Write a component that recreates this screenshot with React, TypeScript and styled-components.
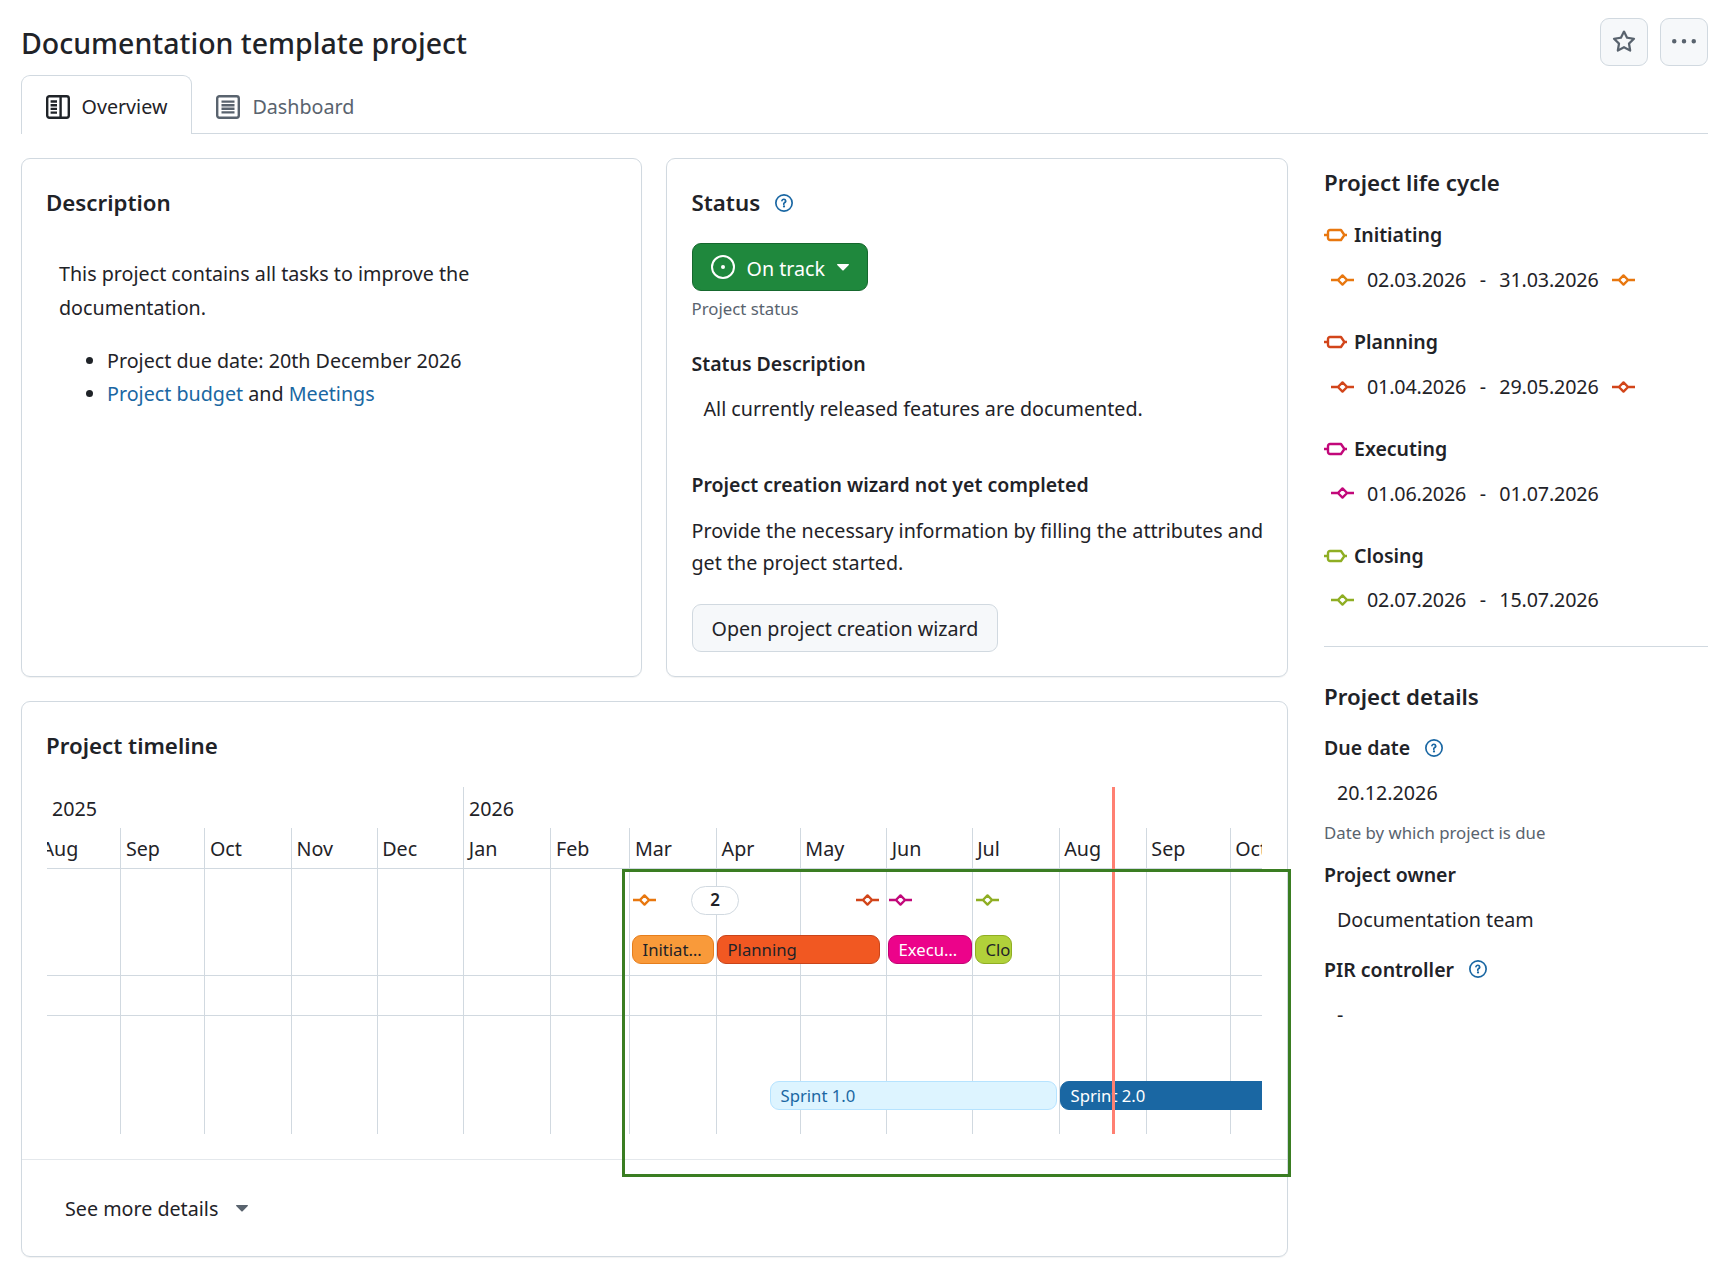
import React from "react";
import styled, { createGlobalStyle } from "styled-components";

const Global = createGlobalStyle`
  * { box-sizing: border-box; }
  html, body { margin: 0; padding: 0; background: #fff; }
  body {
    font-family: "Noto Sans", "Liberation Sans", sans-serif;
    font-size: 19.7px;
    line-height: 33.6px;
    color: #1f2328;
  }
`;

const Page = styled.div`
  width: 1720px;
  min-height: 1274px;
  padding: 18px 12px 0 21px;
`;
const TitleRow = styled.header`
  display: flex;
  justify-content: space-between;
  align-items: flex-start;
  height: 57px;
`;
const Title = styled.h1`
  margin: 0;
  padding-top: 1px;
  font-size: 28.5px;
  line-height: 48px;
  font-weight: 500;
`;
const Actions = styled.div`
  display: flex;
  gap: 12px;
`;
const IconButton = styled.button`
  width: 48px;
  height: 48px;
  padding: 0;
  display: flex;
  align-items: center;
  justify-content: center;
  background: #f6f8fa;
  border: 1.5px solid #d1d9e0;
  border-radius: 9px;
  color: #59636e;
`;
const TabBar = styled.nav`
  display: flex;
  height: 59px;
  border-bottom: 1.5px solid #d1d9e0;
`;
const Tab = styled.a<{ $active?: boolean }>`
  display: flex;
  align-items: center;
  gap: 12px;
  height: 59px;
  padding: 3px 23.5px 0;
  color: ${(p) => (p.$active ? "#1f2328" : "#59636e")};
  ${(p) =>
    p.$active
      ? `background: #fff; border: 1.5px solid #d1d9e0; border-bottom: 0; border-radius: 9px 9px 0 0;`
      : `background: transparent; border: 1.5px solid transparent; border-bottom: 0;`}
`;
const Layout = styled.div`
  display: grid;
  grid-template-columns: 1fr 384px;
  gap: 36px;
  margin-top: 24px;
`;
const MainColumn = styled.main`
  display: grid;
  grid-template-columns: 620.5px 1fr;
  gap: 24px;
`;
const Card = styled.section<{ $wide?: boolean; $inset?: number }>`
  position: relative;
  padding: 24px 24px 24px ${(p) => p.$inset ?? 24}px;
  border: 1.5px solid #d1d9e0;
  border-radius: 9px;
  box-shadow: 0 1px 1px rgba(31, 35, 40, 0.06);
  ${(p) => (p.$wide ? "grid-column: 1 / -1; padding: 0;" : "")}
`;
const CardBody = styled.div`
  padding: 24px 24px 25px;
`;
const CardTitle = styled.h2`
  display: flex;
  align-items: center;
  gap: 15px;
  margin: 0;
  padding-top: 1px;
  font-size: 22.3px;
  line-height: 38.4px;
  font-weight: 600;
`;
const Prose = styled.p`
  margin: 35px 0 0;
  padding: 0 100px 0 13px;
`;
const BulletList = styled.ul`
  margin: 19px 0 0;
  padding: 0 0 0 61px;
`;
const Link = styled.a`
  color: #1a67a3;
`;
const StatusButton = styled.button`
  display: flex;
  align-items: center;
  gap: 12px;
  height: 48px;
  margin-top: 21px;
  padding: 0 18px;
  background: #1f883d;
  color: #fff;
  border: 1.5px solid #16682e;
  border-radius: 9px;
  font: inherit;
`;
const ButtonLabel = styled.span`
  padding-top: 2px;
`;
const Caption = styled.div<{ $mt?: number }>`
  margin-top: ${(p) => p.$mt ?? 4}px;
  font-size: 16.8px;
  line-height: 28.8px;
  color: #59636e;
`;
const SubTitle = styled.h3<{ $mt: number }>`
  display: flex;
  align-items: center;
  gap: 15px;
  margin: ${(p) => p.$mt}px 0 0;
  font-size: 19.5px;
  line-height: 33.6px;
  font-weight: 600;
`;
const IndentedValue = styled.div<{ $mt: number }>`
  margin-top: ${(p) => p.$mt}px;
  padding-left: 12px;
`;
const Paragraph = styled.p`
  margin: 13px -6px 0 0;
  line-height: 32.4px;
`;
const SecondaryButton = styled.button`
  display: block;
  height: 48px;
  margin-top: 24px;
  padding: 2px 19px 0;
  background: #f6f8fa;
  color: #1f2328;
  border: 1.5px solid #d1d9e0;
  border-radius: 9px;
  font: inherit;
`;

/* timeline */
const Chart = styled.div`
  position: relative;
  width: 1215px;
  height: 347px;
  margin: 22px 0 0 1px;
  overflow: hidden;
`;
const YearRow = styled.div`
  display: flex;
  height: 41px;
`;
const Year = styled.div<{ $w: number; $line?: boolean }>`
  width: ${(p) => p.$w}px;
  padding-left: 5px;
  line-height: 44px;
  ${(p) => (p.$line ? "border-left: 1.5px solid #d1d9e0;" : "")}
`;
const MonthRow = styled.div`
  display: flex;
  height: 306px;
  margin-left: -11px;
`;
const Month = styled.div<{ $w: number }>`
  flex: none;
  width: ${(p) => p.$w}px;
  padding-left: 4.5px;
  border-left: 1.5px solid #d1d9e0;
  line-height: 42px;
  white-space: nowrap;
  overflow: hidden;
`;
const ChartRows = styled.div`
  position: absolute;
  left: 0;
  right: 0;
  top: 81px;
`;
const ChartRow = styled.div<{ $h: number }>`
  height: ${(p) => p.$h}px;
  border-top: 1.5px solid #d1d9e0;
`;
const Bar = styled.div<{ $l: number; $w: number; $t: number; $bg: string; $bc: string; $fg: string; $clip?: boolean; $flat?: boolean }>`
  position: absolute;
  left: ${(p) => p.$l - 47}px;
  width: ${(p) => p.$w}px;
  top: ${(p) => p.$t - 787}px;
  height: 29px;
  padding: 0 0 0 9.5px;
  font-size: 16.7px;
  line-height: 28px;
  background: ${(p) => p.$bg};
  color: ${(p) => p.$fg};
  border: 1.5px solid ${(p) => p.$bc};
  border-radius: ${(p) => (p.$flat ? "9px 0 0 9px" : "9px")};
  white-space: nowrap;
  overflow: hidden;
  text-overflow: ${(p) => (p.$clip ? "clip" : "ellipsis")};
  padding-right: ${(p) => (p.$clip ? 0 : 9)}px;
`;
const Marker = styled.div<{ $x: number }>`
  position: absolute;
  left: ${(p) => p.$x - 47 - 12}px;
  top: ${900 - 787 - 8}px;
  display: flex;
`;
const CountBadge = styled.div`
  position: absolute;
  left: ${691 - 47}px;
  top: ${886 - 787}px;
  width: 48px;
  height: 29px;
  border: 1.5px solid #d1d9e0;
  border-radius: 15px;
  background: #fff;
  text-align: center;
  font-size: 17px;
  line-height: 26px;
  font-weight: 600;
`;
const TodayLine = styled.div`
  position: absolute;
  left: ${1111.5 - 47}px;
  top: 0;
  bottom: 0;
  width: 3px;
  background: #ff8072;
`;
const Highlight = styled.div`
  position: absolute;
  left: 600px;
  top: 167.5px;
  width: 669px;
  height: 308px;
  border: 3px solid #3a7d22;
  pointer-events: none;
`;
const CardFooter = styled.div`
  display: flex;
  align-items: center;
  gap: 18px;
  height: 97px;
  padding: 1px 0 0 43px;
  border-top: 1.5px solid #e4e8ec;
  color: #1f2328;
`;

/* sidebar */
const Sidebar = styled.aside`
  padding-top: 6px;
`;
const SideTitle = styled.h2<{ $mt?: number }>`
  margin: ${(p) => p.$mt ?? 0}px 0 0;
  font-size: 22.3px;
  line-height: 38.4px;
  font-weight: 600;
`;
const PhaseName = styled.h3<{ $mt: number }>`
  display: flex;
  align-items: center;
  gap: 7px;
  margin: ${(p) => p.$mt}px 0 0;
  font-size: 19.5px;
  line-height: 33.6px;
  font-weight: 600;
`;
const DateRow = styled.div`
  display: flex;
  align-items: center;
  margin-top: 11px;
  padding-left: 7px;
  letter-spacing: -0.15px;
`;
const DateRange = styled.span`
  display: inline-flex;
  gap: 13.5px;
  margin: 0 13px;
`;
const Divider = styled.hr`
  height: 1.5px;
  margin: 29px 0 0;
  border: 0;
  background: #d1d9e0;
`;
const FieldValue = styled.div<{ $mt: number }>`
  margin-top: ${(p) => p.$mt}px;
  padding-left: 13px;
`;

const Help = () => (
  <svg width="18" height="18" viewBox="0 0 16 16" fill="#1a67a3">
    <path d="M0 8a8 8 0 1 1 16 0A8 8 0 0 1 0 8Zm8-6.5a6.5 6.5 0 1 0 0 13 6.5 6.5 0 0 0 0-13ZM6.92 6.085h.001a.749.749 0 1 1-1.415-.49 2.5 2.5 0 0 1 4.743.328c.247 1.161-.51 1.84-1.197 2.278-.355.226-.49.42-.49.65V9a.75.75 0 0 1-1.5 0v-.149c0-.92.594-1.513 1.078-1.82.462-.295.61-.57.525-.977a1 1 0 0 0-1.745-.37ZM9 11a1 1 0 1 1-2 0 1 1 0 0 1 2 0Z" />
  </svg>
);
const Caret = ({ color }: { color: string }) => (
  <svg width="12" height="7" viewBox="0 0 12 7" fill={color}>
    <path d="M.6 0h10.8c.5 0 .8.6.4 1L6.4 6.4a.6.6 0 0 1-.8 0L.2 1C-.2.6.1 0 .6 0Z" />
  </svg>
);
const Star = () => (
  <svg width="24" height="24" viewBox="0 0 16 16" fill="currentColor">
    <path d="M8 .25a.75.75 0 0 1 .673.418l1.882 3.815 4.21.612a.75.75 0 0 1 .416 1.279l-3.046 2.97.719 4.192a.751.751 0 0 1-1.088.791L8 12.347l-3.766 1.98a.75.75 0 0 1-1.088-.79l.72-4.194L.818 6.374a.75.75 0 0 1 .416-1.28l4.21-.611L7.327.668A.75.75 0 0 1 8 .25Zm0 2.445L6.615 5.5a.75.75 0 0 1-.564.41l-3.097.45 2.24 2.184a.75.75 0 0 1 .216.664l-.528 3.084 2.769-1.456a.75.75 0 0 1 .698 0l2.77 1.456-.53-3.084a.75.75 0 0 1 .216-.664l2.24-2.183-3.096-.45a.75.75 0 0 1-.564-.41L8 2.694Z" />
  </svg>
);
const Kebab = () => (
  <svg width="24" height="24" viewBox="0 0 16 16" fill="currentColor">
    <path d="M8 9a1.5 1.5 0 1 0 0-3 1.5 1.5 0 0 0 0 3ZM1.5 9a1.5 1.5 0 1 0 0-3 1.5 1.5 0 0 0 0 3Zm13 0a1.5 1.5 0 1 0 0-3 1.5 1.5 0 0 0 0 3Z" />
  </svg>
);
const OverviewIcon = () => (
  <svg width="24" height="24" viewBox="0 0 24 24" fill="none" stroke="#1f2328" strokeWidth="2.4">
    <rect x="1.2" y="1.2" width="21.6" height="21.6" rx="2.2" />
    <path d="M14.6 1.2v21.6M4.6 6.5h6.4M4.6 10.2h6.4M4.6 13.9h6.4M4.6 17.6h6.4" />
  </svg>
);
const DashboardIcon = () => (
  <svg width="24" height="24" viewBox="0 0 24 24" fill="none" stroke="#59636e" strokeWidth="2.4">
    <rect x="1.2" y="1.2" width="21.6" height="21.6" rx="2.2" />
    <path d="M5.5 6.6h13M5.5 10.2h13M5.5 13.8h13M5.5 17.4h13" />
  </svg>
);
const TrackIcon = () => (
  <svg width="24" height="24" viewBox="0 0 24 24" fill="none" stroke="#fff" strokeWidth="2">
    <circle cx="12" cy="12" r="11" />
    <circle cx="12" cy="12" r="2" fill="#fff" stroke="none" />
  </svg>
);
const Gate = ({ color }: { color: string }) => (
  <svg width="23" height="16" viewBox="0 0 23 16" fill="none" stroke={color} strokeWidth="2.4" strokeLinejoin="round">
    <path d="M0 8h4M19 8h4M6 3h11l3.4 5-3.4 5H6a2 2 0 0 1-2-2V5a2 2 0 0 1 2-2Z" />
  </svg>
);
const Diamond = ({ color }: { color: string }) => (
  <svg width="23" height="16" viewBox="0 0 23 16" fill="none" stroke={color} strokeWidth="2.4" strokeLinejoin="round">
    <path d="M0 8h7M16 8h7M11.5 3.4 16.1 8l-4.6 4.6L6.9 8Z" />
  </svg>
);

const months = [
  ["Aug", 84.4], ["Sep", 84.1], ["Oct", 86.5], ["Nov", 85.7], ["Dec", 86.7], ["Jan", 87.1], ["Feb", 79],
  ["Mar", 86.6], ["Apr", 83.8], ["May", 86.4], ["Jun", 85.5], ["Jul", 87], ["Aug", 87.1], ["Sep", 83.9], ["Oct", 84],
] as const;

const phases = [
  { name: "Initiating", color: "#e8770f", from: "02.03.2026", to: "31.03.2026", end: true, mt: 16 },
  { name: "Planning", color: "#d2451a", from: "01.04.2026", to: "29.05.2026", end: true, mt: 28.6 },
  { name: "Executing", color: "#c2087a", from: "01.06.2026", to: "01.07.2026", end: false, mt: 28.6 },
  { name: "Closing", color: "#8fae23", from: "02.07.2026", to: "15.07.2026", end: false, mt: 28.6 },
];

const bars = [
  { label: "Initiating", l: 632, w: 82, t: 935, bg: "#f99a3a", bc: "#e67e1c", fg: "#1f2328" },
  { label: "Planning", l: 717, w: 163, t: 935, bg: "#f15822", bc: "#c9441a", fg: "#1f2328" },
  { label: "Executing", l: 888, w: 84, t: 935, bg: "#ec038a", bc: "#c20272", fg: "#fff" },
  { label: "Closing", l: 975, w: 37, t: 935, bg: "#b1d13a", bc: "#8fae23", fg: "#1f2328", clip: true },
  { label: "Sprint 1.0", l: 770, w: 286.5, t: 1081, bg: "#ddf4ff", bc: "#b6e3ff", fg: "#1a67a3" },
  { label: "Sprint 2.0", l: 1060, w: 230, t: 1081, bg: "#1a67a3", bc: "#1a67a3", fg: "#fff", flat: true },
];

const markers = [
  { x: 645, color: "#e8770f" },
  { x: 868, color: "#d2451a" },
  { x: 901, color: "#c2087a" },
  { x: 988, color: "#8fae23" },
];

export default function App() {
  return (
    <Page>
      <Global />
      <TitleRow>
        <Title>Documentation template project</Title>
        <Actions>
          <IconButton aria-label="Favorite"><Star /></IconButton>
          <IconButton aria-label="More"><Kebab /></IconButton>
        </Actions>
      </TitleRow>
      <TabBar>
        <Tab $active><OverviewIcon />Overview</Tab>
        <Tab><DashboardIcon />Dashboard</Tab>
      </TabBar>
      <Layout>
        <MainColumn>
          <Card>
            <CardTitle>Description</CardTitle>
            <Prose>This project contains all tasks to improve the documentation.</Prose>
            <BulletList>
              <li>Project due date: 20th December 2026</li>
              <li><Link>Project budget</Link> and <Link>Meetings</Link></li>
            </BulletList>
          </Card>
          <Card $inset={25}>
            <CardTitle>Status <Help /></CardTitle>
            <StatusButton><TrackIcon /><ButtonLabel>On track</ButtonLabel><Caret color="#fff" /></StatusButton>
            <Caption>Project status</Caption>
            <SubTitle $mt={23}>Status Description</SubTitle>
            <IndentedValue $mt={11}>All currently released features are documented.</IndentedValue>
            <SubTitle $mt={43}>Project creation wizard not yet completed</SubTitle>
            <Paragraph>Provide the necessary information by filling the attributes and get the project started.</Paragraph>
            <SecondaryButton>Open project creation wizard</SecondaryButton>
          </Card>
          <Card $wide>
            <CardBody>
              <CardTitle>Project timeline</CardTitle>
              <Chart>
                <YearRow>
                  <Year $w={416}>2025</Year>
                  <Year $w={700} $line>2026</Year>
                </YearRow>
                <MonthRow>
                  {months.map(([name, w], i) => (
                    <Month key={i} $w={w}>{name}</Month>
                  ))}
                </MonthRow>
                <ChartRows>
                  <ChartRow $h={107} />
                  <ChartRow $h={40} />
                  <ChartRow $h={1} />
                </ChartRows>
                {markers.map((m) => (
                  <Marker key={m.x} $x={m.x}><Diamond color={m.color} /></Marker>
                ))}
                <CountBadge>2</CountBadge>
                {bars.map((b) => (
                  <Bar key={b.label} $l={b.l} $w={b.w} $t={b.t} $bg={b.bg} $bc={b.bc} $fg={b.fg} $clip={b.clip} $flat={b.flat}>{b.label}</Bar>
                ))}
                <TodayLine />
              </Chart>
            </CardBody>
            <CardFooter>See more details <Caret color="#59636e" /></CardFooter>
            <Highlight />
          </Card>
        </MainColumn>
        <Sidebar>
          <SideTitle>Project life cycle</SideTitle>
          {phases.map((p) => (
            <React.Fragment key={p.name}>
              <PhaseName $mt={p.mt}><Gate color={p.color} />{p.name}</PhaseName>
              <DateRow>
                <Diamond color={p.color} />
                <DateRange><span>{p.from}</span><span>-</span><span>{p.to}</span></DateRange>
                {p.end && <Diamond color={p.color} />}
              </DateRow>
            </React.Fragment>
          ))}
          <Divider />
          <SideTitle $mt={31}>Project details</SideTitle>
          <SubTitle $mt={14}>Due date <Help /></SubTitle>
          <FieldValue $mt={12}>20.12.2026</FieldValue>
          <Caption $mt={8.6}>Date by which project is due</Caption>
          <SubTitle $mt={11}>Project owner</SubTitle>
          <FieldValue $mt={10.5}>Documentation team</FieldValue>
          <SubTitle $mt={16.5}>PIR controller <Help /></SubTitle>
          <FieldValue $mt={12}>-</FieldValue>
        </Sidebar>
      </Layout>
    </Page>
  );
}
